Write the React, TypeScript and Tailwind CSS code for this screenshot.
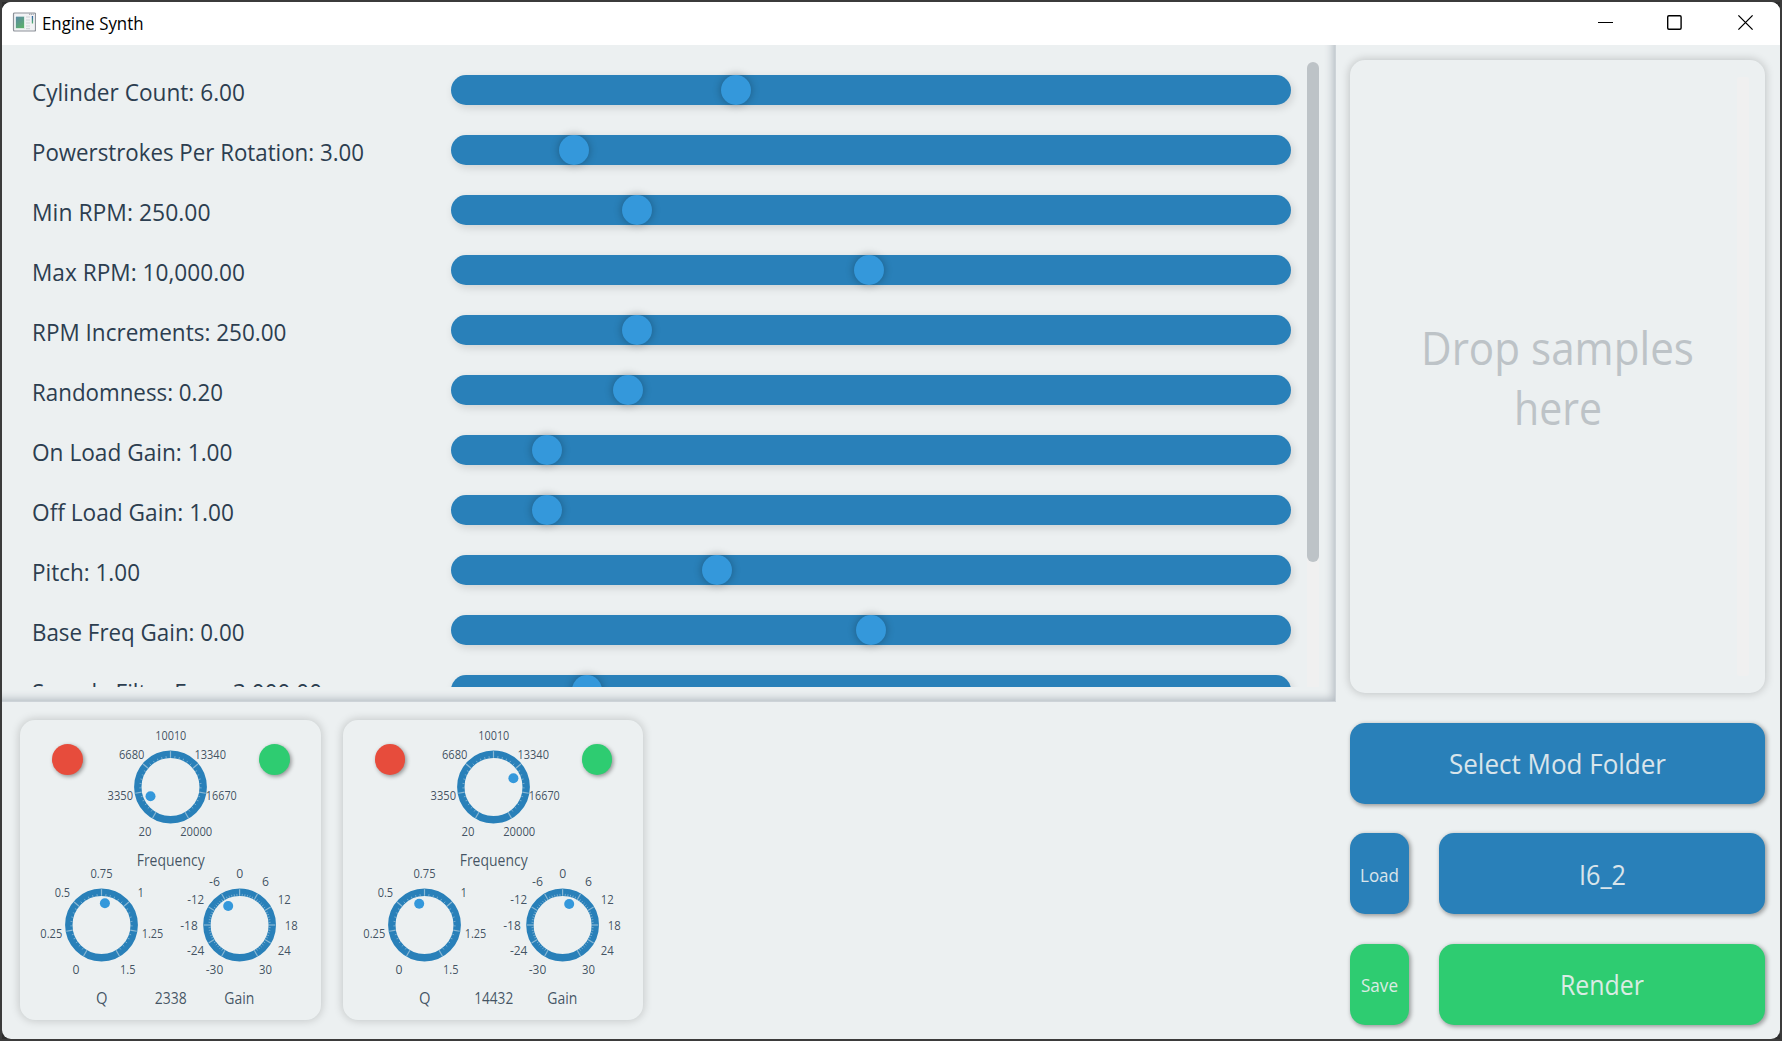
import React from "react";

type Row = { label: string; knob: number; width: number };

const rows: Row[] = [
  { label: "Cylinder Count: 6.00", knob: 736, width: 213 },
  { label: "Powerstrokes Per Rotation: 3.00", knob: 574.3, width: 332 },
  { label: "Min RPM: 250.00", knob: 637, width: 178.5 },
  { label: "Max RPM: 10,000.00", knob: 869, width: 213 },
  { label: "RPM Increments: 250.00", knob: 637, width: 254.5 },
  { label: "Randomness: 0.20", knob: 628, width: 191 },
  { label: "On Load Gain: 1.00", knob: 547, width: 200.5 },
  { label: "Off Load Gain: 1.00", knob: 547, width: 202 },
  { label: "Pitch: 1.00", knob: 717.3, width: 108 },
  { label: "Base Freq Gain: 0.00", knob: 871, width: 212.5 },
  { label: "Sample Filter Freq: 3,000.00", knob: 587, width: 290 },
];

function Label({ text, width, size, className, y = 31, h = 40, middle = false }: { text: string; width: number; size: number; className: string; y?: number; h?: number; middle?: boolean }) {
  return (
    <svg width={width + 4} height={h} className={"overflow-visible " + className}>
      <text x={middle ? (width + 4) / 2 : 0} y={y} textAnchor={middle ? "middle" : "start"} fontSize={size} textLength={width} lengthAdjust="spacingAndGlyphs" fill="currentColor">
        {text}
      </text>
    </svg>
  );
}

function SliderRow({ row }: { row: Row }) {
  return (
    <div className="flex h-[30px] shrink-0 items-center">
      <div className="w-[419px] shrink-0">
        <Label text={row.label} width={row.width} size={23.8} className="text-[#2c3e50]" />
      </div>
      <div className="relative h-[30px] w-[839.5px] shrink-0 rounded-full bg-[#2980b9] shadow-[2px_3px_8px_rgba(0,0,0,0.13)]">
        <div className="absolute top-0 size-[30px] rounded-full bg-[#3498db] shadow-[0_0_8px_rgba(0,0,0,0.3)]" style={{ left: row.knob - 15 - 451 }} />
      </div>
    </div>
  );
}

type Tick = { t: string; x: number; y: number; w: number };

function Knob({ cx, cy, majors, minors, dot, labels }: { cx: number; cy: number; majors: number; minors: number; dot: [number, number]; labels: Tick[] }) {
  const count = (majors - 1) * minors;
  return (
    <g>
      <circle cx={cx} cy={cy} r={32.7} fill="none" stroke="#2980b9" strokeWidth={7.4} />
      {Array.from({ length: count + 1 }, (_, i) => {
        const major = i % minors === 0;
        return (
          <line
            key={i}
            x1={cx}
            x2={cx}
            y1={cy - (major ? 35.8 : 31.2)}
            y2={cy - 29.2}
            stroke="#ecf0f1"
            strokeOpacity={major ? 0.5 : 0.4}
            strokeWidth={major ? 1.2 : 0.9}
            transform={`rotate(${-150 + (300 * i) / count} ${cx} ${cy})`}
          />
        );
      })}
      <circle cx={dot[0]} cy={dot[1]} r={5} fill="#3498db" />
      {labels.map((l) => (
        <text key={l.t} x={l.x} y={l.y} textAnchor="middle" fontSize={13.5} textLength={l.w} lengthAdjust="spacingAndGlyphs" fill="#2c3e50" fillOpacity={0.9}>
          {l.t}
        </text>
      ))}
    </g>
  );
}

const freqLabels: Tick[] = [
  { t: "10010", x: 150.8, y: 20.3, w: 31 },
  { t: "6680", x: 111.7, y: 39.3, w: 25.5 },
  { t: "13340", x: 190.2, y: 39.3, w: 31.5 },
  { t: "3350", x: 100.3, y: 80.3, w: 25.5 },
  { t: "16670", x: 201.3, y: 80.3, w: 31 },
  { t: "20", x: 125, y: 116.3, w: 13 },
  { t: "20000", x: 176.2, y: 116.3, w: 32 },
];
const qLabels: Tick[] = [
  { t: "0.75", x: 81.5, y: 158.3, w: 22 },
  { t: "0.5", x: 42.4, y: 177.3, w: 15.5 },
  { t: "1", x: 120.8, y: 177.3, w: 6.5 },
  { t: "0.25", x: 31.3, y: 218.3, w: 22 },
  { t: "1.25", x: 132.5, y: 218.3, w: 21.5 },
  { t: "0", x: 56, y: 254.3, w: 7 },
  { t: "1.5", x: 107.7, y: 254.3, w: 15.5 },
];
const gainLabels: Tick[] = [
  { t: "0", x: 219.7, y: 158.3, w: 7 },
  { t: "-6", x: 194.5, y: 165.5, w: 11 },
  { t: "6", x: 245.4, y: 165.5, w: 7 },
  { t: "-12", x: 175.7, y: 184.3, w: 17 },
  { t: "12", x: 264.3, y: 184.3, w: 13 },
  { t: "-18", x: 169, y: 210.3, w: 17.5 },
  { t: "18", x: 271.3, y: 210.3, w: 13 },
  { t: "-24", x: 175.7, y: 235.3, w: 17.5 },
  { t: "24", x: 264.2, y: 235.3, w: 13 },
  { t: "-30", x: 194.5, y: 254.3, w: 17.5 },
  { t: "30", x: 245.5, y: 254.3, w: 13 },
];

function FilterCard({ value, vw, dots }: { value: string; vw: number; dots: [number, number][] }) {
  return (
    <div className="h-[300px] w-[300.5px] rounded-[15px] bg-[#ecf0f1] shadow-[0_0_9px_1px_rgba(0,0,0,0.17)]">
      <div className="relative h-full">
        <svg width="300" height="300" className="text-[#2c3e50]">
          <Knob cx={150.5} cy={67} majors={7} minors={6} dot={dots[0]} labels={freqLabels} />
          <Knob cx={81.5} cy={205} majors={7} minors={6} dot={dots[1]} labels={qLabels} />
          <Knob cx={219.6} cy={205} majors={11} minors={6} dot={dots[2]} labels={gainLabels} />
          <g fontSize={15.7} textAnchor="middle" fill="#2c3e50" fillOpacity={0.88}>
            <text x={150.7} y={146.2} textLength={68} lengthAdjust="spacingAndGlyphs">Frequency</text>
            <text x={81.7} y={284.2} textLength={11.5} lengthAdjust="spacingAndGlyphs">Q</text>
            <text x={150.7} y={284.2} textLength={vw} lengthAdjust="spacingAndGlyphs">{value}</text>
            <text x={219.3} y={284.2} textLength={30} lengthAdjust="spacingAndGlyphs">Gain</text>
          </g>
        </svg>
        <button className="absolute top-[24px] left-[32px] size-[30.5px] rounded-full bg-[#e74c3c] shadow-[1.5px_1.5px_4px_rgba(0,0,0,0.4)]" />
        <button className="absolute top-[24px] left-[239px] size-[30.5px] rounded-full bg-[#2ecc71] shadow-[1.5px_1.5px_4px_rgba(0,0,0,0.4)]" />
      </div>
    </div>
  );
}

function Btn({ text, tw, size, y, className }: { text: string; tw: number; size: number; y: number; className: string }) {
  return (
    <button className={"flex h-[81px] items-center justify-center rounded-[15px] text-[#ecf0f1] shadow-[1.5px_1.5px_4px_rgba(0,0,0,0.35)] " + className}>
      <Label text={text} width={tw} size={size} y={y} h={40} middle className="shrink-0 opacity-90" />
    </button>
  );
}

export default function App() {
  return (
    <div className="h-[1041px] w-[1782px] overflow-hidden bg-[#2e2e2e] font-['Open_Sans','Noto_Sans',sans-serif]">
      <div className="h-full w-full border-2 border-[#3b3b3b]">
        <div className="flex h-full w-full flex-col overflow-hidden rounded-[9px] bg-[#ecf0f1]">
          <header className="flex h-[43px] shrink-0 items-start bg-white text-black">
            <svg width="24" height="21" viewBox="0 0 24 21" className="mt-[9.5px] ml-[10px]">
              <defs>
                <linearGradient id="pic" x1="0" y1="0" x2="0.6" y2="1">
                  <stop offset="0" stopColor="#5a87a8" />
                  <stop offset="1" stopColor="#5cae6c" />
                </linearGradient>
                <linearGradient id="bar" x1="0" y1="0" x2="0" y2="1">
                  <stop offset="0" stopColor="#2d5fa8" />
                  <stop offset="1" stopColor="#54b46a" />
                </linearGradient>
              </defs>
              <rect x="1.5" y="1" width="22" height="18" rx="1" fill="#f1f2f4" stroke="#8d9299" strokeWidth="1.2" />
              <rect x="3.5" y="4.2" width="9" height="12.4" fill="url(#pic)" stroke="#fff" strokeWidth="0.6" />
              <path d="M14 5h4M14 8h4M14 11h4M14 14h4M14 16.6h4" stroke="#d0d2d5" strokeWidth="1.2" />
              <rect x="19.8" y="4" width="1.3" height="7.5" fill="url(#bar)" />
              <path d="M17 2.2h5" stroke="#8d9299" strokeWidth="1" strokeDasharray="1.2 0.6" />
            </svg>
            <Label text="Engine Synth" width={101.5} size={17.6} y={22} h={30} className="mt-[6px] ml-[6px]" />
            <div className="flex-1" />
            <svg width="160" height="20" viewBox="0 0 160 20" className="mt-[10px] mr-[22px]" fill="none" stroke="#000">
              <path d="M0 10.5h15" />
              <rect x="69.7" y="3.8" width="13.4" height="13.4" rx="1.2" strokeWidth="1.4" />
              <path d="M140.4 3.4l14.2 14.2M154.6 3.4l-14.2 14.2" strokeWidth="1.3" />
            </svg>
          </header>
          <div className="flex min-h-0 flex-1">
            <div className="flex w-[1334px] shrink-0 flex-col">
              <section className="flex h-[657px] shrink-0 border-r border-b border-[#cdd3d8] shadow-[inset_-7px_-7px_9px_-5px_#b3bac1]">
                <div className="-mr-[8px] flex h-[642px] w-[1304px] shrink-0 flex-col gap-[30px] overflow-hidden pt-[30px] pl-[30px]">
                  {rows.map((r) => (
                    <SliderRow key={r.label} row={r} />
                  ))}
                </div>
                <div className="mt-[17px] ml-[9px] h-[625px] w-[12px] shrink-0 rounded-t-full bg-[#f0f0f0]">
                  <div className="h-[500px] rounded-full bg-[#bdc3c7]" />
                </div>
              </section>
              <section className="flex gap-[22px] pt-[18px] pl-[18.5px]">
                <div className="-ml-[0.5px]">
                  <FilterCard value="2338" vw={32} dots={[[130.5, 76.3], [84.9, 183.3], [208.2, 186]]} />
                </div>
                <FilterCard value="14432" vw={39} dots={[[170.4, 58.2], [76.2, 183.7], [226.2, 184]]} />
              </section>
            </div>
            <aside className="flex flex-1 flex-col pt-[15px] pr-[15px] pl-[14px]">
              <div className="flex h-[633px] shrink-0 items-stretch rounded-[15px] bg-[#ecf0f1] shadow-[0_0_9px_1px_rgba(0,0,0,0.18)]">
                <div className="flex flex-1 flex-col items-center pt-[256px] pl-[28px] text-[#bdc3c7]">
                  <Label text="Drop samples" width={273} size={45} y={49} h={60} middle className="" />
                  <Label text="here" width={88} size={45} y={49} h={60} middle className="" />
                </div>
                <div className="my-[17px] mr-[16px] w-[12px] rounded-[2px] bg-[#f0f0f0]" />
              </div>
              <div className="mt-[29.5px] flex flex-col gap-[29.5px]">
                <Btn text="Select Mod Folder" tw={217} size={27.4} y={31} className="w-full bg-[#2980b9]" />
                <div className="flex gap-[30px]">
                  <Btn text="Load" tw={39} size={18.8} y={28} className="w-[59px] shrink-0 bg-[#2980b9]" />
                  <Btn text="I6_2" tw={47} size={27.4} y={31} className="flex-1 bg-[#2980b9]" />
                </div>
                <div className="flex gap-[30px]">
                  <Btn text="Save" tw={37} size={18.8} y={28} className="w-[59px] shrink-0 bg-[#2ecc71]" />
                  <Btn text="Render" tw={84} size={27.4} y={31} className="flex-1 bg-[#2ecc71]" />
                </div>
              </div>
            </aside>
          </div>
        </div>
      </div>
    </div>
  );
}
